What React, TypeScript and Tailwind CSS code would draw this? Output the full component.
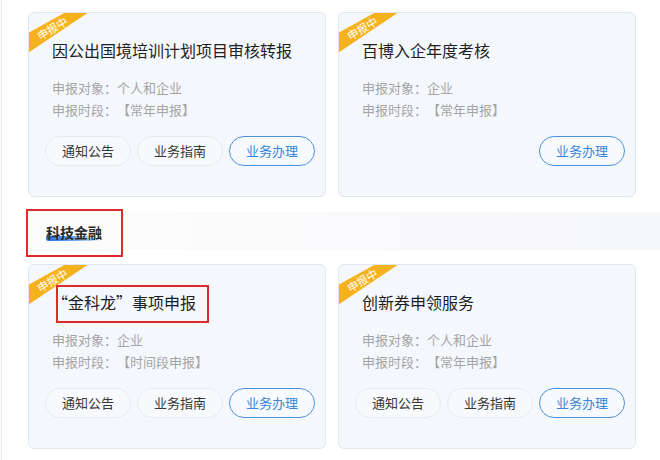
import React from "react";

type CardProps = {
  title: string;
  target: string;
  period: string;
  full?: boolean;
};

function Card({ title, target, period, full = true }: CardProps) {
  return (
    <div className="relative w-[298px] h-[185px] shrink-0 overflow-hidden rounded-[6px] border border-[#e1e7ef] bg-[#f4f8fd]">
      <div className="absolute -left-px -top-px w-[62px] h-[42px] bg-[#f6b21c] [clip-path:polygon(0_21px,38px_0,61px_0,0_41px)]" />
      <span className="absolute left-[4px] top-[8px] w-[38px] text-center text-[11px] leading-[14px] text-white rotate-[-31deg]">
        申报中
      </span>
      <div className="pl-[23px] pt-[25px]">
        <div className="text-[16px] leading-[24px] text-[#1e1e1e]">{title}</div>
        <div className="mt-[15px] text-[13px] leading-[22px] text-[#a4a4a4]">
          <div>申报对象：{target}</div>
          <div>申报时段：【{period}】</div>
        </div>
      </div>
      <div className="mt-[15px] flex justify-end gap-[6px] pr-[10px]">
        {full && (
          <>
            <div className="flex h-[30px] w-[86px] items-center justify-center rounded-full border border-[#e6ebf1] bg-[#f7f9fc] text-[13px] text-[#383838]">
              通知公告
            </div>
            <div className="flex h-[30px] w-[86px] items-center justify-center rounded-full border border-[#e6ebf1] bg-[#f7f9fc] text-[13px] text-[#383838]">
              业务指南
            </div>
          </>
        )}
        <div className="flex h-[30px] w-[86px] items-center justify-center rounded-full border border-[#4b92dc] bg-[#f6f9fd] text-[13px] text-[#3a86d8]">
          业务办理
        </div>
      </div>
    </div>
  );
}

export default function App() {
  return (
    <div className="relative w-[660px] h-[460px] overflow-hidden bg-white pl-px font-['Noto_Sans_CJK_SC','Noto_Sans',sans-serif] [text-spacing-trim:space-all]">
      <div className="h-full border-l border-[#e9e9e9] pl-[26px] pt-[12px]">
        <div className="flex gap-[12px]">
          <Card title="因公出国境培训计划项目审核转报" target="个人和企业" period="常年申报" />
          <Card title="百博入企年度考核" target="企业" period="常年申报" full={false} />
        </div>
        <div className="mt-[15px] flex h-[38px] items-center bg-linear-to-r from-[#fcfcfd] to-[#f6f7f9] pl-[18px]">
          <div className="relative">
            <div className="absolute left-0 top-[17px] h-[5px] w-[56px] rounded-full bg-linear-to-r from-[#1f6fe3] via-[#6aa8f0] to-[#ffffff00]" />
            <span className="relative text-[14px] font-bold leading-[20px] text-[#2b2b2b]">科技金融</span>
          </div>
        </div>
        <div className="mt-[14px] flex gap-[12px]">
          <Card title="“金科龙”事项申报" target="企业" period="时间段申报" />
          <Card title="创新券申领服务" target="个人和企业" period="常年申报" />
        </div>
      </div>
      <div className="absolute left-[26px] top-[209px] h-[48px] w-[97px] border-2 border-[#e02a2a]" />
      <div className="absolute left-[56px] top-[285px] h-[38px] w-[153px] border-2 border-[#e02a2a]" />
    </div>
  );
}
